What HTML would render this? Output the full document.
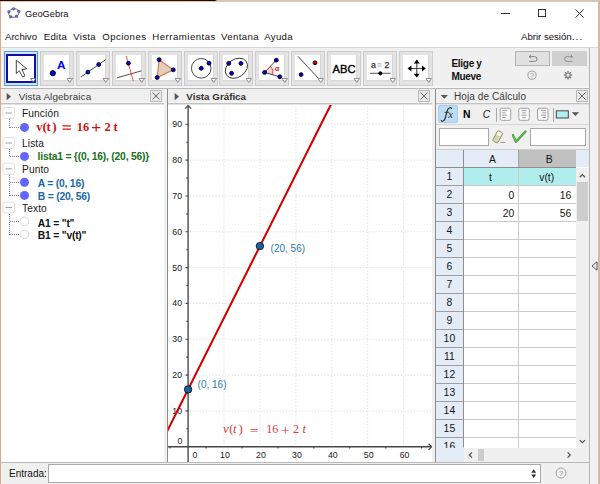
<!DOCTYPE html>
<html><head><meta charset="utf-8">
<style>
*{margin:0;padding:0;box-sizing:border-box}
html,body{width:600px;height:484px;overflow:hidden;background:#fff;font-family:"Liberation Sans",sans-serif;color:#000}
.a{position:absolute}
.t{position:absolute;white-space:nowrap;line-height:1}
</style></head><body>
<!-- window frame -->
<div class="a" style="left:0;top:0;width:600px;height:1px;background:linear-gradient(90deg,#1c0c06 0,#2a1208 30%,#100604 215px,#d0c8c4 217px,#d0c8c4)"></div>
<div class="a" style="left:0;top:1px;width:599px;height:1px;background:#edc3a6"></div>
<div class="a" style="left:0;top:1px;width:1px;height:483px;background:#e0a888"></div>
<div class="a" style="left:598px;top:1px;width:1px;height:483px;background:#e2b698"></div>
<div class="a" style="left:599px;top:0;width:1px;height:484px;background:#c6bcb6"></div>

<!-- title bar -->
<svg class="a" style="left:7px;top:7px" width="15" height="13" viewBox="0 0 15 13">
<ellipse cx="6.8" cy="6" rx="5.1" ry="4.3" transform="rotate(-15 6.8 6)" fill="none" stroke="#555" stroke-width="0.8"/>
<g fill="#6a6af0" stroke="#333" stroke-width="0.35">
<circle cx="6.5" cy="1.8" r="1.35"/><circle cx="11.7" cy="4.3" r="1.35"/><circle cx="9.6" cy="9.3" r="1.35"/><circle cx="3.7" cy="9.8" r="1.35"/><circle cx="1.9" cy="4.8" r="1.35"/>
</g></svg>
<div class="t" style="left:25px;top:10px;font-size:9.3px;color:#111">GeoGebra</div>
<div class="a" style="left:501px;top:13px;width:9px;height:1px;background:#333"></div>
<div class="a" style="left:538px;top:9px;width:8px;height:8px;border:1px solid #333"></div>
<svg class="a" style="left:575px;top:9px" width="9" height="9"><path d="M0.5 0.5L8.5 8.5M8.5 0.5L0.5 8.5" stroke="#333" stroke-width="1"/></svg>

<!-- menu -->
<div class="t" style="left:5px;top:32.4px;font-size:9.6px;color:#111;word-spacing:0">Archivo</div>
<div class="t" style="left:43.7px;top:32.4px;font-size:9.6px;letter-spacing:0.35px;color:#111">Edita</div>
<div class="t" style="left:73.3px;top:32.4px;font-size:9.6px;letter-spacing:0.3px;color:#111">Vista</div>
<div class="t" style="left:102.3px;top:32.4px;font-size:9.6px;letter-spacing:0.45px;color:#111">Opciones</div>
<div class="t" style="left:152.3px;top:32.4px;font-size:9.6px;letter-spacing:0.5px;color:#111">Herramientas</div>
<div class="t" style="left:221px;top:32.4px;font-size:9.6px;letter-spacing:0.4px;color:#111">Ventana</div>
<div class="t" style="left:264.3px;top:32.4px;font-size:9.6px;letter-spacing:0.3px;color:#111">Ayuda</div>
<div class="t" style="left:521px;top:32.4px;font-size:9.6px;color:#111">Abrir sesión<span style="letter-spacing:1.3px">...</span></div>
<div class="a" style="left:1px;top:47px;width:597px;height:1px;background:#d4d4d4"></div>

<!-- toolbar -->
<div class="a" style="left:1px;top:48px;width:597px;height:40px;background:#f0f0f0"></div>
<div class="a" style="left:589px;top:48px;width:1px;height:415px;background:#b2b2b2"></div>
<div class="a" style="left:1px;top:86px;width:588px;height:2px;background:#f6f6f6"></div>
<div class="a" style="left:1px;top:88px;width:588px;height:1px;background:#b8b8b8"></div>
<div class="a" style="left:4.0px;top:51px;width:34px;height:35px;border:1px solid #5b9bd5;background:#cce4f7"></div>
<div class="a" style="left:6.3px;top:53.5px;width:30px;height:29.5px;border:2.5px solid #1111a0;background:#fff"></div>
<svg class="a" style="left:4.0px;top:51px" width="35" height="36" viewBox="0 0 35 36"><path d="M12.3 9.2V22.6L15.3 19.8L18.6 26L21 24.8L17.9 18.6L22.7 17.8Z" fill="#fff" stroke="#333" stroke-width="0.9" stroke-linejoin="miter"/><path d="M26.6 27.4H31.9L29.25 31.3Z" fill="#fff" stroke="#555" stroke-width="0.8"/></svg>
<div class="a" style="left:39.9px;top:51px;width:34px;height:35px;border:1px solid #cdcdcd;background:#e3e3e3"></div>
<div class="a" style="left:43.9px;top:55.4px;width:26px;height:26px;background:#fff;border-right:1.5px solid #d6d6d6;border-bottom:1.5px solid #d6d6d6"></div>
<svg class="a" style="left:39.9px;top:51px" width="35" height="36" viewBox="0 0 35 36"><circle cx="12.85" cy="22.2" r="2.6" fill="#0000ee" stroke="#000" stroke-width="0.9"/><text x="17.1" y="17.5" font-family="Liberation Sans" font-weight="bold" font-size="11.8" fill="#0000ff">A</text><path d="M27 27.5H32.5L29.75 31.5Z" fill="#fff" stroke="#777" stroke-width="0.8"/></svg>
<div class="a" style="left:75.8px;top:51px;width:34px;height:35px;border:1px solid #cdcdcd;background:#e3e3e3"></div>
<div class="a" style="left:79.8px;top:55.4px;width:26px;height:26px;background:#fff;border-right:1.5px solid #d6d6d6;border-bottom:1.5px solid #d6d6d6"></div>
<svg class="a" style="left:75.8px;top:51px" width="35" height="36" viewBox="0 0 35 36"><path d="M4.8 26.1L29.6 8.7" stroke="#333" stroke-width="0.9"/><circle cx="11.9" cy="21.1" r="1.95" fill="#0000d8" stroke="#000" stroke-width="0.9"/><circle cx="22.7" cy="13.5" r="1.95" fill="#0000d8" stroke="#000" stroke-width="0.9"/><path d="M27 27.5H32.5L29.75 31.5Z" fill="#fff" stroke="#777" stroke-width="0.8"/></svg>
<div class="a" style="left:111.7px;top:51px;width:34px;height:35px;border:1px solid #cdcdcd;background:#e3e3e3"></div>
<div class="a" style="left:115.7px;top:55.4px;width:26px;height:26px;background:#fff;border-right:1.5px solid #d6d6d6;border-bottom:1.5px solid #d6d6d6"></div>
<svg class="a" style="left:111.7px;top:51px" width="35" height="36" viewBox="0 0 35 36"><path d="M14.3 4.9L21.3 30.2" stroke="#f04040" stroke-width="0.9"/><path d="M5.1 26.8L29.5 19.8" stroke="#553333" stroke-width="0.9"/><circle cx="16.4" cy="12.2" r="1.95" fill="#0000d8" stroke="#000" stroke-width="0.9"/><path d="M27 27.5H32.5L29.75 31.5Z" fill="#fff" stroke="#777" stroke-width="0.8"/></svg>
<div class="a" style="left:147.6px;top:51px;width:34px;height:35px;border:1px solid #cdcdcd;background:#e3e3e3"></div>
<div class="a" style="left:151.6px;top:55.4px;width:26px;height:26px;background:#fff;border-right:1.5px solid #d6d6d6;border-bottom:1.5px solid #d6d6d6"></div>
<svg class="a" style="left:147.6px;top:51px" width="35" height="36" viewBox="0 0 35 36"><path d="M11.1 8.7L25.3 18.8L9.2 26.5Z" fill="#e8ccbc" stroke="#c87850" stroke-width="1.1"/><circle cx="11.1" cy="8.7" r="1.95" fill="#0000d8" stroke="#000" stroke-width="0.9"/><circle cx="25.3" cy="18.8" r="1.95" fill="#0000d8" stroke="#000" stroke-width="0.9"/><circle cx="9.2" cy="26.5" r="1.95" fill="#0000d8" stroke="#000" stroke-width="0.9"/><path d="M27 27.5H32.5L29.75 31.5Z" fill="#fff" stroke="#777" stroke-width="0.8"/></svg>
<div class="a" style="left:183.5px;top:51px;width:34px;height:35px;border:1px solid #cdcdcd;background:#e3e3e3"></div>
<div class="a" style="left:187.5px;top:55.4px;width:26px;height:26px;background:#fff;border-right:1.5px solid #d6d6d6;border-bottom:1.5px solid #d6d6d6"></div>
<svg class="a" style="left:183.5px;top:51px" width="35" height="36" viewBox="0 0 35 36"><circle cx="17.25" cy="17.3" r="9.8" fill="none" stroke="#333" stroke-width="0.9"/><circle cx="17.25" cy="17.3" r="1.95" fill="#0000d8" stroke="#000" stroke-width="0.9"/><circle cx="25" cy="12.2" r="1.95" fill="#0000d8" stroke="#000" stroke-width="0.9"/><path d="M27 27.5H32.5L29.75 31.5Z" fill="#fff" stroke="#777" stroke-width="0.8"/></svg>
<div class="a" style="left:219.4px;top:51px;width:34px;height:35px;border:1px solid #cdcdcd;background:#e3e3e3"></div>
<div class="a" style="left:223.4px;top:55.4px;width:26px;height:26px;background:#fff;border-right:1.5px solid #d6d6d6;border-bottom:1.5px solid #d6d6d6"></div>
<svg class="a" style="left:219.4px;top:51px" width="35" height="36" viewBox="0 0 35 36"><ellipse cx="17.4" cy="17.25" rx="12" ry="9" transform="rotate(-35 17.4 17.25)" fill="none" stroke="#333" stroke-width="0.9"/><circle cx="9.7" cy="12.4" r="1.95" fill="#0000d8" stroke="#000" stroke-width="0.9"/><circle cx="21.95" cy="12.4" r="1.95" fill="#0000d8" stroke="#000" stroke-width="0.9"/><circle cx="12.6" cy="22.3" r="1.95" fill="#0000d8" stroke="#000" stroke-width="0.9"/><path d="M27 27.5H32.5L29.75 31.5Z" fill="#fff" stroke="#777" stroke-width="0.8"/></svg>
<div class="a" style="left:255.3px;top:51px;width:34px;height:35px;border:1px solid #cdcdcd;background:#e3e3e3"></div>
<div class="a" style="left:259.3px;top:55.4px;width:26px;height:26px;background:#fff;border-right:1.5px solid #d6d6d6;border-bottom:1.5px solid #d6d6d6"></div>
<svg class="a" style="left:255.3px;top:51px" width="35" height="36" viewBox="0 0 35 36"><path d="M9.6 21.4L15.47 15.25A8.5 8.5 0 0 1 17.76 23.76Z" fill="#fcd0d0"/><path d="M15.47 15.25A8.5 8.5 0 0 1 17.76 23.76" fill="none" stroke="#e83030" stroke-width="0.9"/><path d="M21.3 9.15L9.6 21.4L24.8 25.8" fill="none" stroke="#333" stroke-width="0.9"/><circle cx="9.6" cy="21.4" r="1.95" fill="#0000d8" stroke="#000" stroke-width="0.9"/><circle cx="21.3" cy="9.15" r="1.95" fill="#0000d8" stroke="#000" stroke-width="0.9"/><circle cx="24.8" cy="25.8" r="1.95" fill="#0000d8" stroke="#000" stroke-width="0.9"/><text x="19.8" y="19.9" font-family="Liberation Sans" font-weight="bold" font-size="7.5" fill="#e82020">α</text><path d="M27 27.5H32.5L29.75 31.5Z" fill="#fff" stroke="#777" stroke-width="0.8"/></svg>
<div class="a" style="left:291.2px;top:51px;width:34px;height:35px;border:1px solid #cdcdcd;background:#e3e3e3"></div>
<div class="a" style="left:295.2px;top:55.4px;width:26px;height:26px;background:#fff;border-right:1.5px solid #d6d6d6;border-bottom:1.5px solid #d6d6d6"></div>
<svg class="a" style="left:291.2px;top:51px" width="35" height="36" viewBox="0 0 35 36"><path d="M6.9 5.2L30 30.2" stroke="#333" stroke-width="0.9"/><circle cx="24" cy="11.8" r="1.9" fill="#d00000" stroke="#000" stroke-width="0.9"/><circle cx="10.1" cy="23.6" r="1.9" fill="#0000d0" stroke="#000" stroke-width="0.9"/><path d="M27 27.5H32.5L29.75 31.5Z" fill="#fff" stroke="#777" stroke-width="0.8"/></svg>
<div class="a" style="left:327.1px;top:51px;width:34px;height:35px;border:1px solid #cdcdcd;background:#e3e3e3"></div>
<div class="a" style="left:331.1px;top:55.4px;width:26px;height:26px;background:#fff;border-right:1.5px solid #d6d6d6;border-bottom:1.5px solid #d6d6d6"></div>
<svg class="a" style="left:327.1px;top:51px" width="35" height="36" viewBox="0 0 35 36"><text x="5.6" y="21.8" font-family="Liberation Sans" font-size="11.2" fill="#000" stroke="#000" stroke-width="0.35">ABC</text><path d="M27 27.5H32.5L29.75 31.5Z" fill="#fff" stroke="#777" stroke-width="0.8"/></svg>
<div class="a" style="left:363.0px;top:51px;width:34px;height:35px;border:1px solid #cdcdcd;background:#e3e3e3"></div>
<div class="a" style="left:367.0px;top:55.4px;width:26px;height:26px;background:#fff;border-right:1.5px solid #d6d6d6;border-bottom:1.5px solid #d6d6d6"></div>
<svg class="a" style="left:363.0px;top:51px" width="35" height="36" viewBox="0 0 35 36"><text x="8" y="17.2" font-family="Liberation Sans" font-size="8.8" fill="#333" stroke="#333" stroke-width="0.25">a</text><path d="M14.6 12.8H18.5M14.6 15.1H18.5" stroke="#aaa" stroke-width="1"/><text x="21.4" y="17.2" font-family="Liberation Sans" font-size="8.8" fill="#333" stroke="#333" stroke-width="0.25">2</text><path d="M7 22.3H27.7" stroke="#444" stroke-width="0.9"/><circle cx="17.3" cy="22.3" r="1.6" fill="#000" stroke="#000" stroke-width="0.9"/><path d="M27 27.5H32.5L29.75 31.5Z" fill="#fff" stroke="#777" stroke-width="0.8"/></svg>
<div class="a" style="left:398.9px;top:51px;width:34px;height:35px;border:1px solid #cdcdcd;background:#e3e3e3"></div>
<div class="a" style="left:402.9px;top:55.4px;width:26px;height:26px;background:#fff;border-right:1.5px solid #d6d6d6;border-bottom:1.5px solid #d6d6d6"></div>
<svg class="a" style="left:398.9px;top:51px" width="35" height="36" viewBox="0 0 35 36"><path d="M17.8 11V24M11.5 17.5H24.3" stroke="#444" stroke-width="1.1"/><path d="M17.8 8.6L14.8 12.4H20.8Z M17.8 26.6L14.8 22.8H20.8Z M8.6 17.5L12.4 14.5V20.5Z M26.8 17.5L23 14.5V20.5Z" fill="#000"/><path d="M27 27.5H32.5L29.75 31.5Z" fill="#fff" stroke="#777" stroke-width="0.8"/></svg>

<div class="t" style="left:451.5px;top:58.7px;font-size:10px;letter-spacing:-0.3px;font-weight:bold;color:#111">Elige y</div>
<div class="t" style="left:451.5px;top:71.6px;font-size:10px;letter-spacing:-0.3px;font-weight:bold;color:#111">Mueve</div>
<div class="a" style="left:515px;top:51px;width:35px;height:15px;background:#e1e1e1;border:1px solid #b4b4b4"></div>
<div class="a" style="left:552px;top:51px;width:35px;height:15px;background:#d0d0d0"></div>
<svg class="a" style="left:515px;top:51px" width="72" height="16">
<path d="M14.2 5.6H19.6Q22 5.6 22 8Q22 10.4 19.6 10.4H14.2" fill="none" stroke="#7c7c7c" stroke-width="0.95"/>
<path d="M15.9 4L14.1 5.6L15.9 7.2" fill="none" stroke="#7c7c7c" stroke-width="0.95"/>
<path d="M57.5 5.6H52.1Q49.7 5.6 49.7 8Q49.7 10.4 52.1 10.4H57.5" fill="none" stroke="#8e8e8e" stroke-width="0.95"/>
<path d="M55.8 4L57.6 5.6L55.8 7.2" fill="none" stroke="#8e8e8e" stroke-width="0.95"/>
</svg>
<svg class="a" style="left:526px;top:69px" width="12" height="12"><circle cx="6" cy="6.2" r="4.1" fill="none" stroke="#8a8a8a" stroke-width="0.8"/><text x="6" y="8.8" font-size="6.8" text-anchor="middle" fill="#8a8a8a" font-family="Liberation Sans">?</text></svg>
<svg class="a" style="left:562px;top:69px" width="12" height="12"><g transform="translate(6,6.2)" fill="none" stroke="#7a7a7a"><circle r="2.2" stroke-width="1.2"/><path d="M0 -4.2V-2.6M0 4.2V2.6M-4.2 0H-2.6M4.2 0H2.6M-3 -3L-1.9 -1.9M3 3L1.9 1.9M-3 3L-1.9 1.9M3 -3L1.9 -1.9" stroke-width="1.3"/></g></svg>

<!-- panel headers -->
<div class="a" style="left:1px;top:89px;width:163px;height:13px;background:#efefef"></div>
<div class="a" style="left:168px;top:89px;width:267px;height:13px;background:#efefef"></div>
<div class="a" style="left:436px;top:89px;width:153px;height:13px;background:#efefef"></div>
<div class="a" style="left:164px;top:89px;width:3px;height:373px;background:#f0f0f0"></div>
<div class="a" style="left:167px;top:89px;width:1px;height:373px;background:#8c8c8c"></div>
<div class="a" style="left:432px;top:89px;width:3px;height:373px;background:#f0f0f0"></div>
<div class="a" style="left:435px;top:89px;width:1px;height:373px;background:#8c8c8c"></div>

<svg class="a" style="left:6px;top:92px" width="6" height="10"><path d="M0.7 1L5 4.6L0.7 8.2Z" fill="#555"/></svg>
<div class="t" style="left:18.7px;top:91.6px;font-size:9.9px;letter-spacing:0.12px;color:#3a3a3a">Vista Algebraica</div>
<svg class="a" style="left:150px;top:90px" width="12" height="12"><rect x="0.5" y="0.5" width="11" height="11" fill="#e8e8e8" stroke="#bbb"/><path d="M2.5 2.5L9.5 9.5M9.5 2.5L2.5 9.5" stroke="#555" stroke-width="0.9"/></svg>

<svg class="a" style="left:173.5px;top:92px" width="6" height="10"><path d="M0.7 1L5 4.6L0.7 8.2Z" fill="#555"/></svg>
<div class="t" style="left:186.3px;top:91.6px;font-size:9.8px;font-weight:bold;color:#333">Vista Gráfica</div>
<svg class="a" style="left:418px;top:90px" width="12" height="12"><rect x="0.5" y="0.5" width="11" height="11" fill="#e8e8e8" stroke="#bbb"/><path d="M2.5 2.5L9.5 9.5M9.5 2.5L2.5 9.5" stroke="#555" stroke-width="0.9"/></svg>

<svg class="a" style="left:440px;top:94px" width="9" height="6"><path d="M0.7 1L7.9 1L4.3 4.7Z" fill="#555"/></svg>
<div class="t" style="left:454px;top:91.6px;font-size:10px;letter-spacing:0.1px;color:#3a3a3a">Hoja de Cálculo</div>
<svg class="a" style="left:576px;top:90px" width="12" height="12"><rect x="0.5" y="0.5" width="11" height="11" fill="#e8e8e8" stroke="#bbb"/><path d="M2.5 2.5L9.5 9.5M9.5 2.5L2.5 9.5" stroke="#555" stroke-width="0.9"/></svg>

<!-- right side strip -->
<div class="a" style="left:590px;top:48px;width:8px;height:436px;background:#f0f0f0"></div>
<div class="a" style="left:590px;top:48px;width:1px;height:436px;background:#f6f6f6"></div>
<div class="a" style="left:597px;top:48px;width:1px;height:436px;background:#f2f4f6"></div>
<svg class="a" style="left:591px;top:261px" width="7" height="10"><path d="M6 0.8L1 5L6 9.2Z" fill="none" stroke="#555" stroke-width="1"/></svg>

<!-- algebra view -->
<svg class="a" style="left:1px;top:104px" width="163" height="140" viewBox="1 104 163 140">
<g fill="#fff" stroke="#e0e0e0" stroke-width="1">
<rect x="3" y="107.5" width="11.5" height="11" rx="2"/>
<rect x="3" y="137.5" width="11.5" height="11" rx="2"/>
<rect x="3" y="163" width="11.5" height="11.5" rx="2"/>
<rect x="3" y="202" width="11.5" height="11" rx="2"/>
</g>
<g stroke="#a0a0a0" stroke-width="1">
<path d="M5.5 113H12M5.5 143H12M5.5 168.8H12M5.5 207.5H12"/>
</g>
<g stroke="#808080" stroke-width="1" stroke-dasharray="1 1" fill="none" shape-rendering="crispEdges">
<path d="M9.5 119V128M10 127.5H19"/>
<path d="M9.5 149V157M10 156.5H19"/>
<path d="M9.5 175V196M10 182.5H19M10 195.5H19"/>
<path d="M9.5 214V235M10 221.5H19M10 234.5H19"/>
</g>
<g fill="#6464ff">
<circle cx="24.5" cy="127.4" r="4.5"/>
<circle cx="24.5" cy="156.4" r="4.5"/>
<circle cx="24.5" cy="182.2" r="4.5"/>
<circle cx="24.5" cy="195.4" r="4.5"/>
</g>
<g fill="#fff" stroke="#d8d8d8" stroke-width="1">
<circle cx="24.5" cy="221.3" r="4.3"/>
<circle cx="24.5" cy="234.3" r="4.3"/>
</g>
</svg>
<div class="t" style="left:22px;top:109.1px;font-size:10.2px;letter-spacing:0.1px;color:#1a1a1a">Función</div>
<div class="t" style="left:22px;top:139.3px;font-size:10.2px;letter-spacing:0.1px;color:#1a1a1a">Lista</div>
<div class="t" style="left:22px;top:165.3px;font-size:10.2px;letter-spacing:0.1px;color:#1a1a1a">Punto</div>
<div class="t" style="left:22px;top:204.2px;font-size:10.2px;letter-spacing:0.1px;color:#1a1a1a">Texto</div>
<svg class="a" style="left:30px;top:116px" width="95" height="22" viewBox="30 116 95 22">
<g font-family="Liberation Serif" font-weight="bold" fill="#cc1414">
<text x="36.3" y="130.6" font-size="12.5">v</text>
<text x="42.5" y="130.9" font-size="13.4">(</text>
<text x="46.6" y="130.6" font-size="12.5">t</text>
<text x="52.2" y="130.9" font-size="13.4">)</text>
<text x="76.7" y="130.6" font-size="12.4">16</text>
<text x="104.6" y="130.7" font-size="12.4">2</text>
<text x="113.6" y="130.6" font-size="12.5">t</text>
</g>
<path d="M62.5 125.9H70.9M62.5 129.2H70.9M91.9 127.6H100.4M96.15 123.7V131.6" stroke="#cc1414" stroke-width="1.25" fill="none"/>
</svg>
<div class="t" style="left:37.6px;top:152.3px;font-size:10.3px;letter-spacing:-0.2px;font-weight:bold;color:#187020">lista1 = {(0, 16), (20, 56)}</div>
<div class="t" style="left:37.8px;top:179.2px;font-size:10.3px;letter-spacing:-0.2px;font-weight:bold;color:#1a6aa6">A = (0, 16)</div>
<div class="t" style="left:37.8px;top:192.2px;font-size:10.3px;letter-spacing:-0.2px;font-weight:bold;color:#1a6aa6">B = (20, 56)</div>
<div class="t" style="left:37.8px;top:218.8px;font-size:10.3px;letter-spacing:-0.2px;font-weight:bold;color:#111">A1 = "t"</div>
<div class="t" style="left:37.8px;top:231px;font-size:10.3px;letter-spacing:-0.2px;font-weight:bold;color:#111">B1 = "v(t)"</div>

<div class="a" style="left:168px;top:104px;width:264px;height:358px;background:#fff"></div>
<svg class="a" style="left:168px;top:104px" width="264" height="358" viewBox="168 104 264 358">
<path d="M224.0 104V445M259.9 104V445M295.9 104V445M331.8 104V445M367.7 104V445M403.6 104V445M190 410.9H432M190 375.1H432M190 339.2H432M190 303.4H432M190 267.6H432M190 231.8H432M190 196.0H432M190 160.1H432M190 124.3H432" stroke="#dcdcdc" stroke-width="1" stroke-dasharray="1.2 2" fill="none"/>
<path d="M168 410.9H185M168 375.1H185M168 339.2H185M168 303.4H185M168 267.6H185M168 231.8H185M168 196.0H185M168 160.1H185M168 124.3H185" stroke="#e4e4e4" stroke-width="1" stroke-dasharray="1.2 2" fill="none"/>
<path d="M188.1 106V462M168 446.7H431" stroke="#474747" stroke-width="1.35" fill="none"/>
<path d="M185.1 108.6L188.1 105.4L191.1 108.6M428.6 443.7L431.8 446.7L428.6 449.7" stroke="#474747" stroke-width="1.2" fill="none"/>
<path d="M186.3 428.8H188.1M185.6 410.9H188.1M186.3 393.0H188.1M185.6 375.1H188.1M186.3 357.1H188.1M185.6 339.2H188.1M186.3 321.3H188.1M185.6 303.4H188.1M186.3 285.5H188.1M185.6 267.6H188.1M186.3 249.7H188.1M185.6 231.8H188.1M186.3 213.9H188.1M185.6 196.0H188.1M186.3 178.1H188.1M185.6 160.1H188.1M186.3 142.2H188.1M185.6 124.3H188.1M186.3 464.6H188.1M170.1 446.7V448.5M206.1 446.7V448.5M242.0 446.7V448.5M277.9 446.7V448.5M313.8 446.7V448.5M349.7 446.7V448.5M385.7 446.7V448.5M421.6 446.7V448.5" stroke="#474747" stroke-width="1.1" fill="none"/>
<g font-family="Liberation Sans" font-size="8.8" fill="#222"><text x="182.1" y="413.9" text-anchor="end">10</text><text x="182.1" y="378.1" text-anchor="end">20</text><text x="182.1" y="342.2" text-anchor="end">30</text><text x="182.1" y="306.4" text-anchor="end">40</text><text x="182.1" y="270.6" text-anchor="end">50</text><text x="182.1" y="234.8" text-anchor="end">60</text><text x="182.1" y="199.0" text-anchor="end">70</text><text x="182.1" y="163.1" text-anchor="end">80</text><text x="182.1" y="127.3" text-anchor="end">90</text><text x="182.3" y="444.2" text-anchor="end">0</text><text x="192.5" y="458">0</text><text x="225.0" y="458" text-anchor="middle">10</text><text x="260.9" y="458" text-anchor="middle">20</text><text x="296.9" y="458" text-anchor="middle">30</text><text x="332.8" y="458" text-anchor="middle">40</text><text x="368.7" y="458" text-anchor="middle">50</text><text x="404.6" y="458" text-anchor="middle">60</text></g>
<path d="M166 433.46L331.19 104" stroke="#d00000" stroke-width="2.05" fill="none"/>
<circle cx="188.1" cy="389.4" r="3.7" fill="#1565a5" stroke="#111" stroke-width="0.9"/>
<circle cx="259.9" cy="246.1" r="3.7" fill="#1565a5" stroke="#111" stroke-width="0.9"/>
<g font-family="Liberation Sans" font-size="10" fill="#2a7ab0"><text x="197.6" y="387.6">(0, 16)</text><text x="270.6" y="251.8">(20, 56)</text></g>
<g font-family="Liberation Serif" font-size="11.6" fill="#d03c3c"><text x="223" y="432.5" font-style="italic" font-size="13">v</text><text x="229.3" y="433" font-size="12.8">(</text><text x="233" y="432.5" font-style="italic" font-size="12.5">t</text><text x="238.6" y="433" font-size="12.8">)</text><text x="249.8" y="434.8" font-size="13" transform="translate(249.8 0) scale(1.2 1) translate(-249.8 0)">=</text><text x="266.3" y="432.5" font-size="12">16</text><text x="281" y="435.5" font-size="14" transform="translate(281 0) scale(1.1 1) translate(-281 0)">+</text><text x="293.1" y="432.5" font-size="12">2</text><text x="302.6" y="432.5" font-style="italic" font-size="12.5">t</text></g>
</svg>
<div class="a" style="left:436px;top:104px;width:153px;height:46px;background:#f0f0f0"></div>
<div class="a" style="left:436px;top:124px;width:153px;height:1px;background:#d6d6d6"></div>
<div class="a" style="left:436px;top:148.5px;width:153px;height:1px;background:#cfcfcf"></div>
<div class="a" style="left:438px;top:105px;width:19.5px;height:17.5px;background:#bcdcf4;border:1px solid #a8cdea;border-radius:2px"></div>
<svg class="a" style="left:436px;top:104px" width="22" height="20"><path d="M15.6 4.4Q15.2 3.6 14 3.7Q12 3.9 11.3 6.5L9 14.8Q8.2 17.3 6.3 17.2Q5.4 17.1 5.3 16.6" fill="none" stroke="#2a2a2a" stroke-width="1.15" stroke-linecap="round"/><path d="M8.6 8.3H13.3" stroke="#2a2a2a" stroke-width="0.9"/></svg>
<svg class="a" style="left:436px;top:104px" width="22" height="20"><text x="12.3" y="13.6" font-family="Liberation Serif" font-style="italic" font-size="10.5" fill="#2a2a2a">x</text></svg>
<div class="t" style="left:463px;top:110px;font-size:10.4px;font-weight:bold;color:#000">N</div>
<div class="t" style="left:482.8px;top:110px;font-size:10.2px;font-style:italic;color:#222">C</div>
<div class="a" style="left:495.5px;top:107.5px;width:1.5px;height:14px;background:#a8a8a8"></div>
<div class="a" style="left:552.5px;top:107.5px;width:1.5px;height:14px;background:#a8a8a8"></div>
<svg class="a" style="left:0;top:0" width="600" height="130"><rect x="500.2" y="108.3" width="10.5" height="12" rx="1.5" fill="#fafafa" stroke="#999" stroke-width="0.9"/><path d="M502.2 110.6h5" stroke="#888" stroke-width="0.8"/><path d="M502.2 112.9h3.5" stroke="#888" stroke-width="0.8"/><path d="M502.2 115.2h5" stroke="#888" stroke-width="0.8"/><path d="M502.2 117.5h3.5" stroke="#888" stroke-width="0.8"/><rect x="518.8" y="108.3" width="10.5" height="12" rx="1.5" fill="#fafafa" stroke="#999" stroke-width="0.9"/><path d="M521.5 110.6h5" stroke="#888" stroke-width="0.8"/><path d="M522.3 112.9h3.5" stroke="#888" stroke-width="0.8"/><path d="M521.5 115.2h5" stroke="#888" stroke-width="0.8"/><path d="M522.3 117.5h3.5" stroke="#888" stroke-width="0.8"/><rect x="537.5" y="108.3" width="10.5" height="12" rx="1.5" fill="#fafafa" stroke="#999" stroke-width="0.9"/><path d="M541.0 110.6h5" stroke="#888" stroke-width="0.8"/><path d="M542.5 112.9h3.5" stroke="#888" stroke-width="0.8"/><path d="M541.0 115.2h5" stroke="#888" stroke-width="0.8"/><path d="M542.5 117.5h3.5" stroke="#888" stroke-width="0.8"/><rect x="556.3" y="110.8" width="12" height="7.2" fill="#aef0f0" stroke="#444" stroke-width="1"/><path d="M571.7 112.3H579.2L575.45 115.9Z" fill="#555"/></svg>
<div class="a" style="left:439.3px;top:128.3px;width:49.5px;height:17.5px;background:#fff;border:1px solid #a9a9a9"></div>
<div class="a" style="left:530px;top:127.8px;width:56px;height:18px;background:#fff;border:1px solid #a9a9a9"></div>
<svg class="a" style="left:488px;top:126px" width="42" height="22"><g transform="translate(9.6 11) rotate(28)"><rect x="-2.9" y="-6" width="5.8" height="11.6" rx="1.4" fill="#d8d6a4" stroke="#8c8866" stroke-width="0.8"/><rect x="-2.1" y="-5.2" width="4.2" height="3.6" rx="0.6" fill="#f8f8f2"/></g><path d="M12.4 16.5H17.6" stroke="#666" stroke-width="0.6"/><path d="M25 9.2L28 15.7L37.5 5.6" fill="none" stroke="#2c8c2c" stroke-width="2.2" stroke-linecap="round" stroke-linejoin="round"/><path d="M25 9.2L28 15.7L37.5 5.6" fill="none" stroke="#7ae05a" stroke-width="0.9" stroke-linecap="round" stroke-linejoin="round"/></svg>
<div class="a" style="left:436px;top:149.5px;width:153px;height:312.5px;background:#fff"></div>
<div class="a" style="left:436px;top:149.5px;width:140px;height:17.5px;background:#e4ecf7"></div>
<div class="a" style="left:518.5px;top:149.5px;width:57.5px;height:17.5px;background:#c0c0c0"></div>
<div class="a" style="left:576px;top:149.5px;width:13px;height:17.5px;background:#e4ecf7"></div>
<div class="a" style="left:436px;top:167px;width:27px;height:295px;background:#e4ecf7"></div>
<div class="a" style="left:463.5px;top:167.5px;width:112.5px;height:17.5px;background:#b0eeee"></div>
<svg class="a" style="left:0;top:0" width="600" height="484"><rect x="463" y="185" width="113" height="1" fill="#cbcbcb"/><rect x="436" y="185" width="27" height="1" fill="#9f9f9f"/><rect x="463" y="203" width="113" height="1" fill="#cbcbcb"/><rect x="436" y="203" width="27" height="1" fill="#9f9f9f"/><rect x="463" y="221" width="113" height="1" fill="#cbcbcb"/><rect x="436" y="221" width="27" height="1" fill="#9f9f9f"/><rect x="463" y="239" width="113" height="1" fill="#cbcbcb"/><rect x="436" y="239" width="27" height="1" fill="#9f9f9f"/><rect x="463" y="257" width="113" height="1" fill="#cbcbcb"/><rect x="436" y="257" width="27" height="1" fill="#9f9f9f"/><rect x="463" y="275" width="113" height="1" fill="#cbcbcb"/><rect x="436" y="275" width="27" height="1" fill="#9f9f9f"/><rect x="463" y="293" width="113" height="1" fill="#cbcbcb"/><rect x="436" y="293" width="27" height="1" fill="#9f9f9f"/><rect x="463" y="311" width="113" height="1" fill="#cbcbcb"/><rect x="436" y="311" width="27" height="1" fill="#9f9f9f"/><rect x="463" y="329" width="113" height="1" fill="#cbcbcb"/><rect x="436" y="329" width="27" height="1" fill="#9f9f9f"/><rect x="463" y="347" width="113" height="1" fill="#cbcbcb"/><rect x="436" y="347" width="27" height="1" fill="#9f9f9f"/><rect x="463" y="365" width="113" height="1" fill="#cbcbcb"/><rect x="436" y="365" width="27" height="1" fill="#9f9f9f"/><rect x="463" y="383" width="113" height="1" fill="#cbcbcb"/><rect x="436" y="383" width="27" height="1" fill="#9f9f9f"/><rect x="463" y="401" width="113" height="1" fill="#cbcbcb"/><rect x="436" y="401" width="27" height="1" fill="#9f9f9f"/><rect x="463" y="419" width="113" height="1" fill="#cbcbcb"/><rect x="436" y="419" width="27" height="1" fill="#9f9f9f"/><rect x="463" y="437" width="113" height="1" fill="#cbcbcb"/><rect x="436" y="437" width="27" height="1" fill="#9f9f9f"/><rect x="436" y="167" width="140" height="1" fill="#8e8e8e"/><rect x="463" y="150" width="1" height="298" fill="#8e8e8e"/><rect x="463" y="447.5" width="1" height="14.5" fill="#e4ecf7"/><rect x="518" y="150" width="1" height="17" fill="#a4a4a4"/><rect x="518" y="168" width="1" height="280" fill="#cbcbcb"/></svg>
<div class="a" style="left:576px;top:168px;width:13px;height:280px;background:#f0f0f0"></div>
<div class="a" style="left:576.5px;top:182.3px;width:11.5px;height:38.5px;background:#cdcdcd"></div>
<div class="a" style="left:464px;top:448px;width:125px;height:14px;background:#f0f0f0"></div>
<div class="a" style="left:478px;top:449px;width:5.7px;height:11.7px;background:#cdcdcd"></div>
<svg class="a" style="left:0;top:0" width="600" height="484"><g fill="none" stroke="#555" stroke-width="1.3"><path d="M579.8 177.2L582.4 174.6L585 177.2"/><path d="M579.8 440.1L582.4 442.7L585 440.1"/><path d="M472 452.4L469.4 455L472 457.6"/><path d="M567.6 452.4L570.2 455L567.6 457.6"/></g></svg>
<svg class="a" style="left:436px;top:148px" width="153" height="300" viewBox="436 148 153 300"><g font-family="Liberation Sans" font-size="10.4" fill="#151515">
<text x="492.4" y="162.9" text-anchor="middle">A</text>
<text x="549.2" y="162.9" text-anchor="middle">B</text>
<text x="449.4" y="179.9" text-anchor="middle">1</text>
<text x="449.4" y="197.9" text-anchor="middle">2</text>
<text x="449.4" y="215.9" text-anchor="middle">3</text>
<text x="449.4" y="233.9" text-anchor="middle">4</text>
<text x="449.4" y="251.9" text-anchor="middle">5</text>
<text x="449.4" y="269.9" text-anchor="middle">6</text>
<text x="449.4" y="287.9" text-anchor="middle">7</text>
<text x="449.4" y="305.9" text-anchor="middle">8</text>
<text x="449.4" y="323.9" text-anchor="middle">9</text>
<text x="449.4" y="341.9" text-anchor="middle">10</text>
<text x="449.4" y="359.9" text-anchor="middle">11</text>
<text x="449.4" y="377.9" text-anchor="middle">12</text>
<text x="449.4" y="395.9" text-anchor="middle">13</text>
<text x="449.4" y="413.9" text-anchor="middle">14</text>
<text x="449.4" y="431.9" text-anchor="middle">15</text>
<text x="449.4" y="449.9" text-anchor="middle">16</text>
<text x="490.4" y="180.5" text-anchor="middle">t</text>
<text x="546.7" y="180.5" text-anchor="middle">v(t)</text>
<text x="514.3" y="198.5" text-anchor="end">0</text>
<text x="571.2" y="198.5" text-anchor="end">16</text>
<text x="514.3" y="216.5" text-anchor="end">20</text>
<text x="571.2" y="216.5" text-anchor="end">56</text>
</g></svg>
<div class="a" style="left:436px;top:447.8px;width:27px;height:14.2px;background:#e4ecf7"></div>
<div class="a" style="left:464px;top:448px;width:125px;height:14px;background:#f0f0f0"></div>
<div class="a" style="left:478px;top:449px;width:5.7px;height:11.7px;background:#cdcdcd"></div>
<svg class="a" style="left:0;top:0" width="600" height="484"><g fill="none" stroke="#555" stroke-width="1.3"><path d="M472 452.4L469.4 455L472 457.6"/><path d="M567.6 452.4L570.2 455L567.6 457.6"/></g></svg>
<!-- header bottom lines -->
<div class="a" style="left:1px;top:102px;width:163px;height:1px;background:#f7f7f7"></div>
<div class="a" style="left:1px;top:103px;width:163px;height:1px;background:#c2c2c2"></div>
<div class="a" style="left:1px;top:104px;width:163px;height:1px;background:#e2e2e2"></div>
<div class="a" style="left:168px;top:102px;width:264px;height:1px;background:#f7f7f7"></div>
<div class="a" style="left:168px;top:103px;width:264px;height:1px;background:#c2c2c2"></div>
<div class="a" style="left:168px;top:104px;width:264px;height:1px;background:#e2e2e2"></div>
<div class="a" style="left:436px;top:102px;width:153px;height:1px;background:#f7f7f7"></div>
<div class="a" style="left:436px;top:103px;width:153px;height:1px;background:#c2c2c2"></div>
<div class="a" style="left:436px;top:104px;width:153px;height:1px;background:#e2e2e2"></div>
<!-- input bar -->
<div class="a" style="left:1px;top:462px;width:588px;height:1px;background:#b8b8b8"></div>
<div class="a" style="left:1px;top:463px;width:588px;height:21px;background:#f0f0f0"></div>
<div class="a" style="left:589px;top:463px;width:1px;height:21px;background:#b2b2b2"></div>
<div class="t" style="left:9px;top:469px;font-size:10px;color:#111">Entrada:</div>
<div class="a" style="left:48px;top:464px;width:493px;height:19px;background:#fff;border:1px solid #aaa"></div>
<svg class="a" style="left:530px;top:468px" width="8" height="11"><path d="M3.7 1.3L6.2 4.7H1.2Z M3.7 9.9L6.2 6.5H1.2Z" fill="#333"/></svg>
<svg class="a" style="left:555px;top:467px" width="12" height="12"><circle cx="6" cy="6" r="5" fill="none" stroke="#999" stroke-width="0.9"/><text x="6" y="9.2" font-size="8" text-anchor="middle" fill="#999" font-family="Liberation Sans">?</text></svg>

</body></html>
